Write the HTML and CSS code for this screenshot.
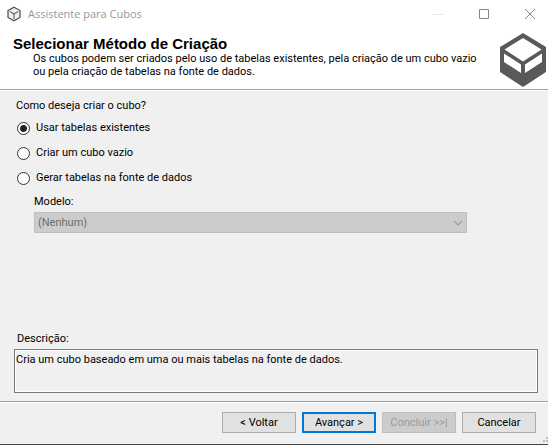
FILE: index.html
```html
<!DOCTYPE html>
<html lang="pt">
<head>
<meta charset="utf-8">
<title>Assistente para Cubos</title>
<link rel="stylesheet" href="styles.css">
</head>
<body>
<div class="window">
  <div class="titlebar">
    <svg class="app-icon" width="14" height="16" viewBox="0 0 14 16" fill="none" stroke="#4a4a4a" stroke-width="1.2"><path d="M7 1.200 13 4.600v6.800L7 14.800 1 11.400V4.600z" fill="#f0f0f0"/><path d="M3 5.600 7 8l4-2.400M7 8v5" stroke="#666"/></svg>
    <span class="caption">Assistente para Cubos</span>
    <button class="sys" type="button" aria-label="Minimizar" disabled><svg width="12" height="12" viewBox="0 0 12 12"><path d="M1 6.500h10" stroke="#e2e2e2"/></svg></button>
    <button class="sys" type="button" aria-label="Maximizar"><svg width="12" height="12" viewBox="0 0 12 12"><path d="M1.500 1.500h9v9h-9z" fill="none" stroke="#858585"/></svg></button>
    <button class="sys" type="button" aria-label="Fechar"><svg width="12" height="12" viewBox="0 0 12 12"><path d="M1 1l10 10M11 1 1 11" stroke="#858585"/></svg></button>
  </div>
  <header class="header">
    <div class="heading">
      <h1>Selecionar Método de Criação</h1>
      <p>Os cubos podem ser criados pelo uso de tabelas existentes, pela criação de um cubo vazio<br>ou pela criação de tabelas na fonte de dados.</p>
    </div>
    <svg class="logo" width="46" height="54" viewBox="0 0 46 54"><path d="M23 0 46 14v25L23 54 0 39V14z" fill="#58595b"/><path d="M23 5 41.500 16.500 23 28.500 4.500 16.500zM4 20.500l17 11v8.500L4 29zM42 20.500 25 31.500v8.500L42 29z" fill="#fff"/></svg>
  </header>
  <main class="content">
    <fieldset class="options">
      <legend>Como deseja criar o cubo?</legend>
      <label><input type="radio" name="metodo" checked>Usar tabelas existentes</label>
      <label><input type="radio" name="metodo">Criar um cubo vazio</label>
      <label><input type="radio" name="metodo">Gerar tabelas na fonte de dados</label>
    </fieldset>
    <div class="model">
      <label for="modelo">Modelo:</label>
      <div class="select-box">
        <select id="modelo" disabled><option>(Nenhum)</option></select>
        <svg class="chevron" width="10" height="6" viewBox="0 0 10 6"><path d="M1 1l4 4 4-4" fill="none" stroke="#9f9f9f" stroke-width="1.2"/></svg>
      </div>
    </div>
    <div class="description">
      <label for="descricao">Descrição:</label>
      <textarea id="descricao" readonly>Cria um cubo baseado em uma ou mais tabelas na fonte de dados.</textarea>
    </div>
  </main>
  <footer class="footer">
    <button class="btn back" type="button">&lt; Voltar</button>
    <button class="btn next" type="button">Avançar &gt;</button>
    <button class="btn finish" type="button" disabled>Concluir &gt;&gt;|</button>
    <button class="btn" type="button">Cancelar</button>
    <svg class="grip" width="5" height="6" viewBox="0 0 5 6" fill="#bfbfbf"><path d="M3 0h2v2H3zM0 3h2v2H0zM3 3h2v2H3z"/></svg>
  </footer>
</div>
</body>
</html>
```
FILE: styles.css
```css
* { box-sizing: border-box; }

body {
  margin: 0;
  font: 11px/14px Roboto, "Liberation Sans", sans-serif;
  color: #000;
  background: #f0f0f0;
}

button, select, textarea { font: inherit; color: inherit; }

.window {
  display: flex;
  flex-direction: column;
  min-height: 100vh;
  border-bottom: 1px solid #444;
}

.titlebar {
  display: flex;
  align-items: center;
  height: 27px;
  padding-left: 7px;
  overflow: hidden;
  background: #fff;
}

.caption {
  flex: 1;
  margin-left: 7px;
  font: 11px/16px "Open Sans", "Noto Sans", sans-serif;
  color: #999;
}

.sys {
  display: flex;
  align-items: center;
  justify-content: center;
  width: 46px;
  height: 27px;
  padding: 0;
  border: 0;
  background: none;
}

.sys:last-child { margin-right: -5px; }

.header {
  display: flex;
  justify-content: space-between;
  height: 63px;
  padding: 6px 2px 0 13px;
  border-bottom: 1px solid #a0a0a0;
  background: #fff;
}

.heading { padding-top: 2px; }

h1 {
  margin: 0;
  font: bold 15px/17px "Liberation Sans", Arial, sans-serif;
}

p {
  margin: 0;
  padding-left: 20px;
  line-height: 13px;
}

.logo { flex: none; }

.content {
  display: flex;
  flex: 1;
  flex-direction: column;
  padding: 8px 10px 8px 14px;
  border-top: 1px solid #fff;
}

.options {
  display: flex;
  flex-direction: column;
  gap: 11px;
  margin: 0;
  padding: 0 0 0 3px;
  border: 0;
}

legend {
  margin: 0 0 8px -1px;
  padding: 0;
}

.options label {
  display: flex;
  align-items: center;
  gap: 6px;
  height: 14px;
}

input[type="radio"] {
  appearance: none;
  width: 13px;
  height: 13px;
  margin: 0;
  border: 1px solid #333;
  border-radius: 50%;
  background: #fff;
}

input[type="radio"]:checked {
  background: radial-gradient(circle, #222 3px, #fff 4px);
}

.model {
  display: flex;
  flex-direction: column;
  gap: 3px;
  margin: 10px 71px 0 20px;
}

.select-box { position: relative; }

select {
  display: block;
  appearance: none;
  width: 100%;
  height: 21px;
  padding: 0 3px;
  border: 1px solid #bfbfbf;
  border-radius: 0;
  background: #ccc;
}

select:disabled { color: #6d6d6d; opacity: 1; }

.chevron {
  position: absolute;
  top: 8px;
  right: 4px;
}

.description {
  display: flex;
  flex-direction: column;
  gap: 3px;
  margin-top: auto;
}

.description label { margin-left: 3px; }

textarea {
  display: block;
  width: 100%;
  height: 44px;
  padding: 3px 1px;
  border: 1px solid #7a7a7a;
  box-shadow: inset 0 0 0 1px #fff;
  background: #f0f0f0;
  border-radius: 0;
  outline: 0;
  resize: none;
}

.footer {
  position: relative;
  display: flex;
  justify-content: flex-end;
  gap: 6px;
  height: 43px;
  padding: 10px 12px 0;
  border-top: 1px solid #a0a0a0;
  box-shadow: inset 0 1px #fff;
}

.btn {
  width: 74px;
  height: 21px;
  padding: 0;
  border: 1px solid #adadad;
  background: #e1e1e1;
}

.next { border: 2px solid #0078d7; }

.finish {
  border-color: #bfbfbf;
  background: #ccc;
  color: #999;
}

.grip {
  position: absolute;
  right: 0;
  bottom: 1px;
}
```
